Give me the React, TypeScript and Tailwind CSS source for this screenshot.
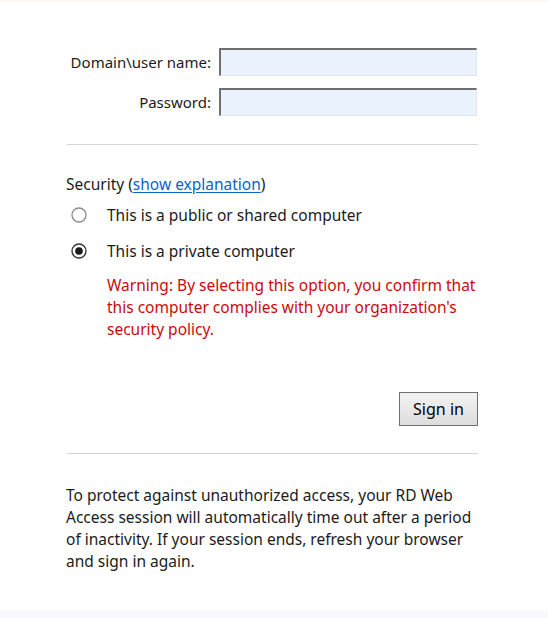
import React from 'react';

function Radio({ checked }: { checked?: boolean }) {
  return (
    <svg width="16" height="16" viewBox="0 0 16 16" className="shrink-0">
      <circle cx="8" cy="8" r="7" fill="#fff" stroke={checked ? '#333' : '#8a8a8a'} strokeWidth="1.3" />
      {checked && <circle cx="8" cy="8" r="3.8" fill="#1a1a1a" />}
    </svg>
  );
}

function Field({ label, type }: { label: string; type: string }) {
  return (
    <div className="flex items-center">
      <label className="w-[145px] text-right text-[15px] whitespace-nowrap">{label}</label>
      <input
        type={type}
        className="ml-[8px] w-[258px] h-[28px] bg-[#e9f2fd] border-t-2 border-l-2 border-r border-b border-t-[#6f6f6f] border-l-[#6f6f6f] border-r-[#dfe5ec] border-b-[#dfe5ec] outline-none"
      />
    </div>
  );
}

export default function App() {
  return (
    <div className="min-h-[618px] bg-white text-[#1b1b1b] text-[15.5px] leading-[22px] font-['Noto_Sans',sans-serif] flex flex-col">
      <div className="h-[2px] bg-[#fff8f1]" />
      <div className="pl-[66px] w-[478px] flex-1">
        <div className="mt-[46px] flex flex-col gap-[12px]">
          <Field label="Domain\user name:" type="text" />
          <Field label="Password:" type="password" />
        </div>

        <hr className="mt-[28px] ml-[1px] border-0 h-px bg-[#d4d4d4]" />

        <div className="mt-[28px] whitespace-nowrap">
          Security (<a href="#" className="text-[#0a64c8] underline underline-offset-2">show explanation</a>)
        </div>

        <div className="mt-[2px]">
          <div className="h-[36px] flex items-center pl-[5px] gap-[20px]">
            <Radio />
            <span>This is a public or shared computer</span>
          </div>
          <div className="h-[36px] flex items-center pl-[5px] gap-[20px]">
            <Radio checked />
            <span>This is a private computer</span>
          </div>
        </div>

        <p className="mt-[5px] ml-[41px] text-[#cc0a0a] whitespace-nowrap">
          Warning: By selecting this option, you confirm that
          <br />
          this computer complies with your organization's
          <br />
          security policy.
        </p>

        <div className="mt-[52px] flex justify-end">
          <button className="w-[79px] h-[34px] border border-[#707070] bg-gradient-to-b from-[#f3f3f3] to-[#dddddd] text-[16px] text-black">
            Sign in
          </button>
        </div>

        <hr className="mt-[27px] ml-[1px] border-0 h-px bg-[#d4d4d4]" />

        <p className="mt-[30px] whitespace-nowrap">
          To protect against unauthorized access, your RD Web
          <br />
          Access session will automatically time out after a period
          <br />
          of inactivity. If your session ends, refresh your browser
          <br />
          and sign in again.
        </p>
      </div>
      <div className="h-[8px] bg-[#f8f8fd]" />
    </div>
  );
}
